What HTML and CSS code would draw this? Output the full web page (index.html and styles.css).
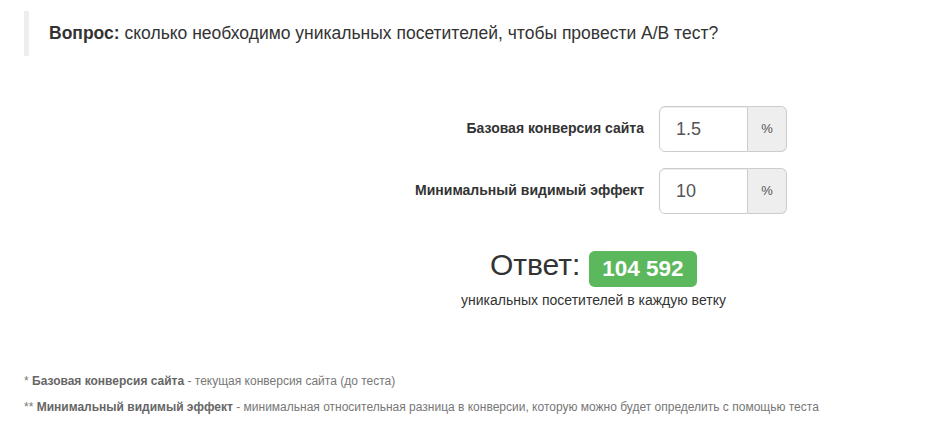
FILE: index.html
```html
<!DOCTYPE html>
<html lang="ru">
<head>
    <meta charset="UTF-8">
    <meta name="viewport" content="width=device-width, initial-scale=1.0">
    <title>Калькулятор A/B теста</title>
    <link rel="stylesheet" href="styles.css">
</head>
<body>
    <div class="page">
        <blockquote class="question">
            <b>Вопрос:</b> сколько необходимо уникальных посетителей, чтобы провести A/B тест?
        </blockquote>

        <div class="calc">
            <div class="form-row">
                <label for="base">Базовая конверсия сайта</label>
                <div class="input-group">
                    <input id="base" type="text" value="1.5">
                    <span class="addon">%</span>
                </div>
            </div>
            <div class="form-row">
                <label for="effect">Минимальный видимый эффект</label>
                <div class="input-group">
                    <input id="effect" type="text" value="10">
                    <span class="addon">%</span>
                </div>
            </div>

            <div class="result">
                <h2>Ответ: <span class="label-success">104 592</span></h2>
                <p>уникальных посетителей в каждую ветку</p>
            </div>
        </div>

        <div class="notes">
            <p>* <b>Базовая конверсия сайта</b> - текущая конверсия сайта (до теста)</p>
            <p>** <b>Минимальный видимый эффект</b> - минимальная относительная разница в конверсии, которую можно будет определить с помощью теста</p>
        </div>
    </div>
</body>
</html>
```

FILE: styles.css
```css
body { font-family: "Liberation Sans", Arial, sans-serif; font-size: 14px; line-height: 1.42857; color: #333; background: #fff; margin: 0; }
.page { padding: 11px 24px 0; }

.question { margin: 0 0 50px; padding: 10px 20px; border-left: 5px solid #eee; font-size: 17.5px; line-height: 25px; }
.question b { font-weight: bold; }

.calc { margin-left: 376px; width: 387px; }
.form-row { display: flex; justify-content: flex-end; align-items: center; gap: 15px; margin-bottom: 16px; }
.form-row label { font-weight: bold; }
.input-group { display: flex; width: 128px; height: 46px; }
.input-group input { box-sizing: border-box; width: 89px; height: 46px; margin: 0; padding: 10px 16px; border: 1px solid #ccc; border-radius: 6px 0 0 6px; font-family: inherit; font-size: 18px; color: #555; box-shadow: inset 0 1px 1px rgba(0,0,0,.075); outline: none; }
.addon { box-sizing: border-box; width: 39px; display: flex; align-items: center; justify-content: center; background: #eee; border: 1px solid #ccc; border-left: 0; border-radius: 0 6px 6px 0; font-size: 13px; color: #555; }

.result { text-align: center; margin-top: 34px; }
.result h2 { margin: 0 0 10px; font-size: 30px; font-weight: 500; line-height: 1.1; }
.label-success { background: #5cb85c; color: #fff; font-size: 75%; font-weight: bold; line-height: 1; padding: .2em .6em .3em; border-radius: .25em; }
.result p { margin: 0; }

.notes { margin-top: 62px; }
.notes p { margin: 0 0 9px; font-size: 12px; line-height: 17px; color: #777; }
.notes b { color: #666; }
```
